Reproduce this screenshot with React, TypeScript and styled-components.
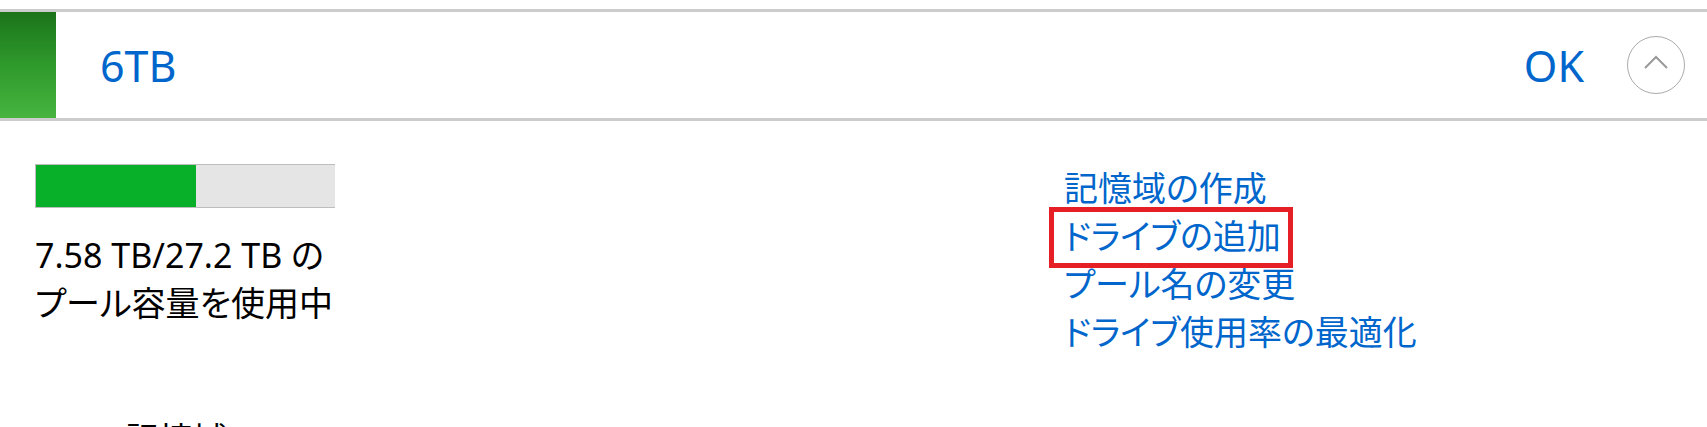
import React from "react";
import styled, { createGlobalStyle } from "styled-components";

const GlobalStyle = createGlobalStyle`
  html, body {
    margin: 0;
    background: #ffffff;
  }
  body {
    font-family: "Noto Sans", "Noto Sans CJK JP", sans-serif;
    font-feature-settings: "palt";
    color: #000000;
  }
`;

const Page = styled.div`
  padding-top: 9px;
`;

// pool header bar
const PoolHeader = styled.header`
  display: flex;
  align-items: center;
  height: 106px;
  border-top: 3px solid #cccccc;
  border-bottom: 3px solid #cccccc;
  padding-right: 22px;
`;

const StatusStripe = styled.div<{ $ok?: boolean }>`
  align-self: stretch;
  width: 56px;
  background: ${({ $ok }) =>
    $ok
      ? "linear-gradient(to bottom, #1a731a 0%, #2f9a2c 50%, #46b43f 100%)"
      : "linear-gradient(to bottom, #8a1a1a, #c84040)"};
`;

const PoolName = styled.h2`
  flex: 1;
  margin: 0 0 0 44px;
  font-size: 43px;
  font-weight: 400;
  line-height: 1;
  color: #0066cc;
`;

const StatusText = styled.span`
  font-size: 43px;
  line-height: 1;
  color: #0066cc;
`;

const CollapseButton = styled.button`
  display: flex;
  align-items: center;
  justify-content: center;
  box-sizing: border-box;
  width: 58px;
  height: 58px;
  margin-left: 43px;
  padding: 0 0 6px;
  border: 1px solid #ababab;
  border-radius: 50%;
  background: #ffffff;
  cursor: pointer;
`;

// body of the pool panel
const Body = styled.div`
  display: grid;
  grid-template-columns: 1fr 608px;
  padding: 43px 35px 0;
`;

const UsageColumn = styled.div`
  display: flex;
  flex-direction: column;
`;

const UsageBar = styled.div`
  box-sizing: border-box;
  width: 300px;
  height: 44px;
  border: 1px solid #bdbdbd;
  border-right: none;
  background: #e5e5e5;
`;

const UsageFill = styled.div`
  height: 100%;
  background: #07b028;
`;

const UsageText = styled.p`
  margin: 23px 0 0;
  font-size: 34px;
  line-height: 48px;
`;

const ActionList = styled.ul`
  margin: 0;
  padding: 0;
  list-style: none;
  font-size: 34px;
  line-height: 48px;
`;

const ActionItem = styled.li`
  white-space: nowrap;
`;

const ActionLink = styled.a<{ $marked?: boolean }>`
  position: relative;
  color: #0066cc;
  text-decoration: none;
  cursor: pointer;

  ${({ $marked }) =>
    $marked &&
    `
    &::after {
      content: "";
      position: absolute;
      left: -15px;
      right: -12px;
      top: -6px;
      bottom: -9px;
      border: 5px solid #e61e25;
      pointer-events: none;
    }
  `}
`;

const SectionTitle = styled.h3`
  margin: 60px 0 0;
  padding-left: 125px;
  font-size: 34px;
  font-weight: 400;
  line-height: 47px;
`;

const actions = [
  { label: "記憶域の作成" },
  { label: "ドライブの追加", marked: true },
  { label: "プール名の変更" },
  { label: "ドライブ使用率の最適化" },
];

export default function App() {
  const used = 160 / 299; // fill ratio as drawn

  return (
    <Page>
      <GlobalStyle />
      <PoolHeader>
        <StatusStripe $ok />
        <PoolName>6TB</PoolName>
        <StatusText>OK</StatusText>
        <CollapseButton aria-label="折りたたむ">
          <svg width="24" height="14" viewBox="0 0 24 14">
            <polyline
              points="1,13 12,2 23,13"
              fill="none"
              stroke="#9a9a9a"
              strokeWidth="2"
            />
          </svg>
        </CollapseButton>
      </PoolHeader>
      <Body>
        <UsageColumn>
          <UsageBar>
            <UsageFill style={{ width: `${used * 100}%` }} />
          </UsageBar>
          <UsageText>
            7.58 TB/27.2 TB の
            <br />
            プール容量を使用中
          </UsageText>
        </UsageColumn>
        <ActionList>
          {actions.map((a) => (
            <ActionItem key={a.label}>
              <ActionLink $marked={a.marked}>{a.label}</ActionLink>
            </ActionItem>
          ))}
        </ActionList>
      </Body>
      <SectionTitle>記憶域</SectionTitle>
    </Page>
  );
}
